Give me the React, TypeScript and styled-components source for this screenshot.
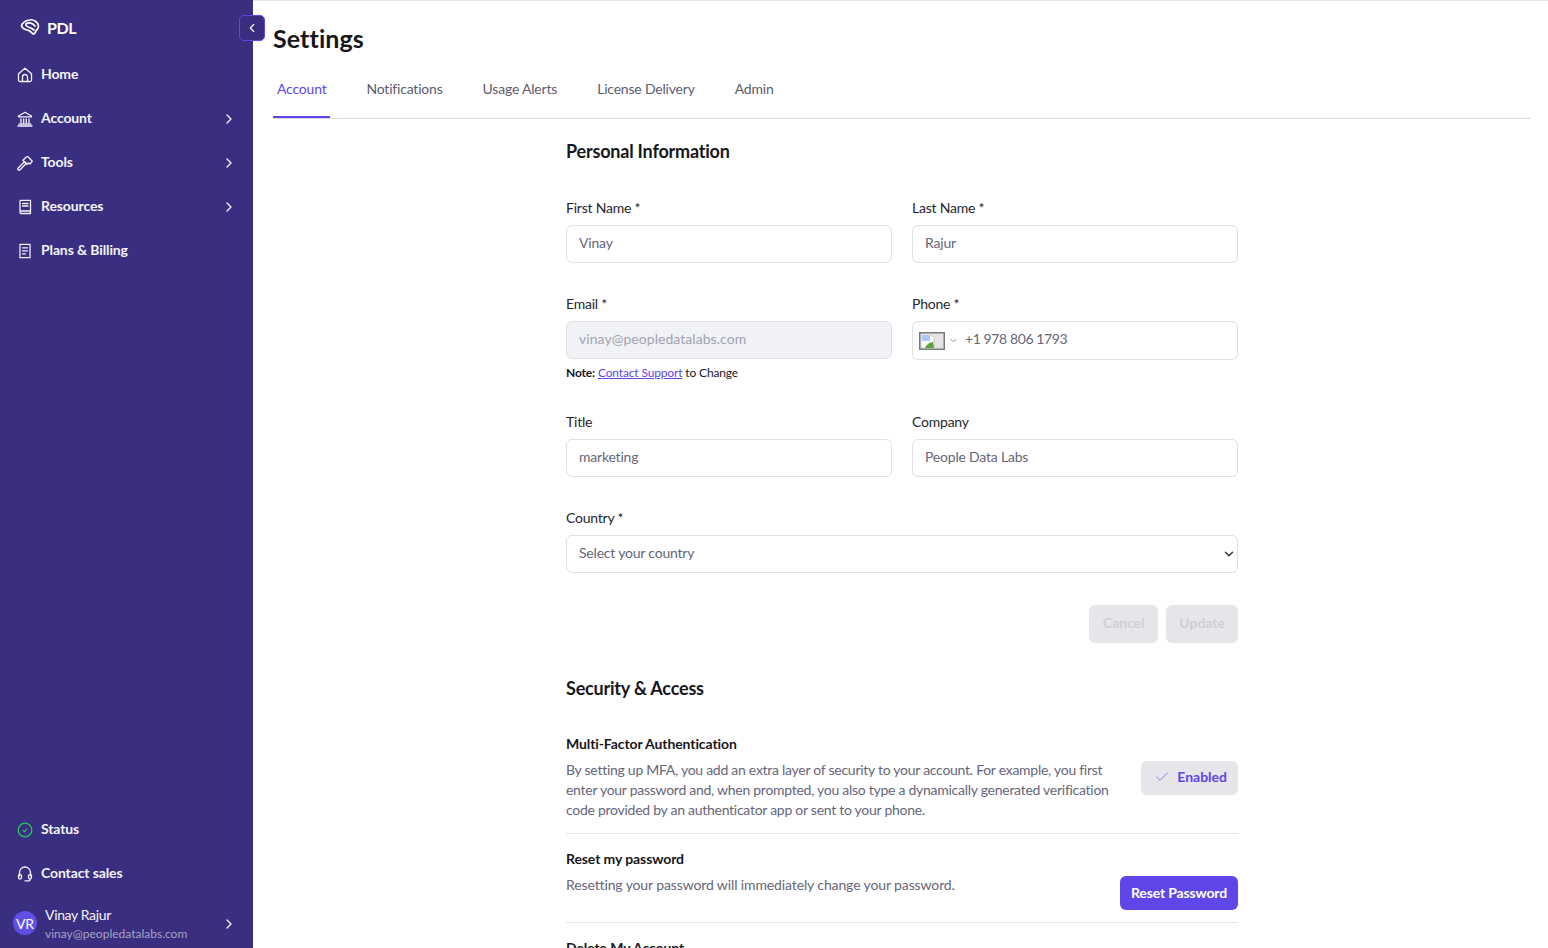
import React from 'react';
import styled, { createGlobalStyle } from 'styled-components';
import { ChevronDown, ChevronLeft, ChevronRight, Check } from 'lucide-react';

const GlobalStyle = createGlobalStyle`
  html, body {
    margin: 0;
    height: 100%;
    overflow: hidden;
    background: #fff;
  }
  * {
    box-sizing: border-box;
  }
  body {
    font-family: Lato, 'Noto Sans', sans-serif;
    color: #17171c;
  }
`;

const Page = styled.div`
  display: flex;
  height: 948px;
  overflow: hidden;
`;

const Sidebar = styled.aside`
  position: relative;
  flex: 0 0 253px;
  display: flex;
  flex-direction: column;
  background: #392e7f;
  color: #fff;
`;

const Brand = styled.div`
  display: flex;
  align-items: center;
  gap: 7px;
  height: 52px;
  padding: 2px 0 0 20px;
  font-size: 16px;
  font-weight: 700;
  letter-spacing: -0.4px;
`;

const CollapseButton = styled.button`
  position: absolute;
  top: 15px;
  right: -12px;
  width: 26px;
  height: 26px;
  display: flex;
  align-items: center;
  justify-content: center;
  padding: 0;
  color: #fff;
  background: #392e7f;
  border: 1px solid #5f46e8;
  border-radius: 5px;
`;

const NavList = styled.nav`
  display: flex;
  flex-direction: column;
`;

const NavItem = styled.div`
  display: flex;
  align-items: center;
  height: 44px;
  padding: 0 17px;
  gap: 8px;
  font-size: 14px;
  font-weight: 700;
  letter-spacing: -0.12px;
  color: #f4f3fa;
`;

const NavLabel = styled.span`
  flex: 1;
  padding-bottom: 2px;
`;

const IconSlot = styled.span`
  flex: 0 0 16px;
  display: flex;
  align-items: center;
  justify-content: center;
  margin-top: 2px;
`;

const ChevronSlot = styled.span`
  display: flex;
  margin: 2px -1px 0 0;
`;

const SidebarFooter = styled.div`
  margin-top: auto;
  display: flex;
  flex-direction: column;
`;

const UserRow = styled.div`
  display: flex;
  align-items: center;
  height: 50px;
  padding: 0 17px 0 13px;
  margin-top: 3px;
`;

const Avatar = styled.div`
  flex: 0 0 24px;
  height: 24px;
  border-radius: 50%;
  display: flex;
  align-items: center;
  justify-content: center;
  background: #5f4fe6;
  font-size: 14px;
  margin-right: 8px;
`;

const UserText = styled.div`
  flex: 1;
  display: flex;
  flex-direction: column;
  gap: 3px;
`;

const UserName = styled.span`
  font-size: 14px;
  letter-spacing: -0.35px;
  color: #f4f3fa;
`;

const UserEmail = styled.span`
  font-size: 12px;
  color: #a5a1c6;
`;

const Main = styled.main`
  flex: 1;
  min-width: 0;
  padding: 0 17px 0 20px;
  border-top: 1px solid #e5e5ea;
`;

const Title = styled.h1`
  margin: 0;
  padding-top: 21px;
  height: 65px;
  font-size: 25px;
  line-height: 32px;
  font-weight: 700;
  letter-spacing: 0.1px;
  color: #17171c;
`;

const Tabs = styled.div`
  display: flex;
  gap: 32px;
  height: 53px;
  border-bottom: 1px solid #d9d9de;
`;

const Tab = styled.div<{ $active?: boolean }>`
  height: 52px;
  padding: 13px 4px 0;
  font-size: 14px;
  line-height: 20px;
  letter-spacing: -0.2px;
  color: ${p => (p.$active ? '#5f46e8' : '#5c5c6e')};
  border-bottom: 2px solid ${p => (p.$active ? '#5f46e8' : 'transparent')};
`;

const Content = styled.div`
  width: 672px;
  margin: 0 auto;
`;

const SectionTitle = styled.h2<{ $top?: number }>`
  margin: ${p => p.$top ?? 0}px 0 0;
  font-size: 18px;
  line-height: 28px;
  font-weight: 700;
  letter-spacing: -0.2px;
`;

const FormGrid = styled.div`
  display: grid;
  grid-template-columns: 326px 326px;
  column-gap: 20px;
  margin-top: 33px;
`;

const Field = styled.div<{ $wide?: boolean; $height: number }>`
  grid-column: ${p => (p.$wide ? '1 / span 2' : 'auto')};
  height: ${p => p.$height}px;
`;

const Label = styled.label`
  display: block;
  height: 27px;
  font-size: 14px;
  line-height: 20px;
  letter-spacing: -0.22px;
  color: #26262e;
`;

const Input = styled.div<{ $disabled?: boolean; $tall?: boolean }>`
  display: flex;
  align-items: center;
  height: ${p => (p.$tall ? 39 : 38)}px;
  padding: 0 12px 4px;
  font-size: 14px;
  letter-spacing: ${p => (p.$disabled ? '0.05px' : '-0.2px')};
  color: ${p => (p.$disabled ? '#a2a2b2' : '#66667a')};
  background: ${p => (p.$disabled ? '#f1f2f5' : '#fff')};
  border: 1px solid #e0e0e6;
  border-radius: 6px;
`;

const FlagPicker = styled.span`
  display: flex;
  align-items: center;
  gap: 3px;
  margin: 4px 6px 0 -6px;
`;

const PhoneNumber = styled.span`
  letter-spacing: -0.4px;
`;

const SelectValue = styled.span`
  flex: 1;
`;

const SelectArrow = styled.span`
  display: flex;
  margin: 4px -11px 0 0;
`;

const Note = styled.div`
  margin-top: 6px;
  font-size: 12px;
  line-height: 16px;
  letter-spacing: -0.15px;
  color: #17171c;

  strong {
    font-weight: 700;
  }

  a {
    color: #5f46e8;
    text-decoration: underline;
  }
`;

const FormActions = styled.div`
  display: flex;
  justify-content: flex-end;
  gap: 8px;
  margin-top: 32px;
`;

const DisabledButton = styled.button`
  min-width: 69px;
  height: 38px;
  padding: 0 13px 4px;
  font: 700 14px Lato, sans-serif;
  color: #cfcfd6;
  background: #e5e5ea;
  border: 0;
  border-radius: 6px;
`;

const SecuritySection = styled.section`
  margin-top: 31px;
`;

const SettingList = styled.div`
  margin-top: 32px;
`;

const SettingRow = styled.div<{ $pad: number }>`
  display: flex;
  justify-content: space-between;
  align-items: center;
  gap: 32px;
  padding-bottom: ${p => p.$pad}px;
  margin-bottom: 15px;
  border-bottom: 1px solid #e5e5ea;
`;

const SettingText = styled.div`
  flex: 1;
  align-self: flex-start;
`;

const SettingName = styled.div`
  font-size: 14px;
  line-height: 20px;
  font-weight: 700;
  letter-spacing: -0.1px;
  margin-bottom: 6px;
`;

const SettingBody = styled.p<{ $tight?: boolean }>`
  margin: 0;
  font-size: 14px;
  line-height: 20px;
  letter-spacing: ${p => (p.$tight ? '-0.27px' : '-0.12px')};
  color: #66667a;
`;

const EnabledBadge = styled.div`
  display: flex;
  align-items: center;
  gap: 7px;
  height: 34px;
  margin-top: 2px;
  padding: 0 11px 3px 13px;
  font-size: 14px;
  font-weight: 700;
  color: #5f46e8;
  background: #e5e5ea;
  border-radius: 6px;
`;

const PrimaryButton = styled.button`
  height: 34px;
  padding: 0 11px 2px;
  margin-top: 27px;
  font: 700 14px Lato, sans-serif;
  letter-spacing: -0.15px;
  color: #fff;
  background: #5f46e8;
  border: 0;
  border-radius: 6px;
`;

const Glyph = styled.svg.attrs({ width: 16, height: 16, viewBox: '0 0 16 16', fill: 'none' })`
  stroke: #f4f3fa;
  stroke-width: 1.3;
  stroke-linecap: round;
  stroke-linejoin: round;
`;

const PdlLogo = () => (
  <svg width="20" height="18" viewBox="0 0 20 18" fill="none" stroke="#fff" strokeWidth="1.700" strokeLinejoin="round" strokeLinecap="round">
    <path d="M1.500 8C1.800 5 6 2 10 1.800 14 1.500 18 4 18.500 8c.3 3-2.500 4-3 6-.5 2-2.500 2.500-3.500 1l-3-2.500C6 12 2.500 11 1.500 8Z" />
    <path d="M6 5.800c3-1.800 7-.8 9 2.200M6 5.800c-1 2.200 2 3.200 5 4.200l3 2" />
  </svg>
);

const HomeIcon = () => (
  <Glyph>
    <path d="M1.500 6.800 8 1.200l6.500 5.600v6.200a1.500 1.500 0 0 1-1.500 1.500H3A1.500 1.500 0 0 1 1.500 13z" />
    <path d="M5.500 14.500v-4.500a2.500 2.500 0 0 1 5 0v4.500" />
  </Glyph>
);

const BankIcon = () => (
  <Glyph>
    <path d="M1.500 5 8 1.300 14.500 5v.8h-13z" />
    <path d="M4 8v4M6.700 8v4M9.300 8v4M12 8v4M2 13.200h12M1 15h14" />
  </Glyph>
);

const HammerIcon = () => (
  <Glyph>
    <path d="M1.200 13 7.500 6.800l1.700 1.700-6.200 6.300a1.200 1.200 0 0 1-1.800-1.800Z" />
    <path d="M6 5.300 9 2.200c.8-.7 1.800-.7 2.500 0l3.800 4-2.300 2.800-1.500-1.300-1.500 1.800L6 5.300Z" />
  </Glyph>
);

const BookIcon = () => (
  <Glyph>
    <path d="M3 12.500V2.200c0-.5.4-.9.900-.9H13.500v10.700H4.200C3.500 12 3 12.500 3 13.200s.5 1.300 1.200 1.300h9.300V12" />
    <path d="M5.500 4.500h5.500M5.500 7h5.500" />
  </Glyph>
);

const ReceiptIcon = () => (
  <Glyph>
    <path d="M3 1.300h10v13.400H3z" strokeDasharray="1.600 .9" />
    <path d="M5.500 4.800h5M5.500 7.800h5M5.500 10.800h3" />
  </Glyph>
);

const StatusIcon = () => (
  <svg width="16" height="16" viewBox="0 0 16 16" fill="none" stroke="#22c55e" strokeWidth="1.300">
    <circle cx="8" cy="8" r="6.800" />
    <path d="m5.800 8.200 1.600 1.400 2.800-3" />
  </svg>
);

const HeadsetIcon = () => (
  <Glyph>
    <path d="M2.500 10V6.500a5.500 5.500 0 0 1 11 0V10" />
    <path d="M1.500 10a1.500 1.500 0 0 1 3 0v1.500a1.500 1.500 0 0 1-3 0zM11.500 10a1.500 1.500 0 0 1 3 0v1.500a1.500 1.500 0 0 1-3 0z" />
    <path d="M13 13.500v.2c0 .6-.5 1.100-1.200 1.100H8" />
  </Glyph>
);

// the browser's broken-image marker, stretched to the flag's box
const BrokenImage = () => (
  <svg width="26" height="18" viewBox="0 0 26 18">
    <rect x="0.750" y="0.750" width="24.500" height="16.500" fill="#e4e4e4" stroke="#7a7a7a" strokeWidth="1.500" />
    <path d="M2 2h9l4 4v10H2z" fill="#fff" stroke="#aaa" strokeWidth="0.600" />
    <path d="M3 3h8v6H3z" fill="#a9c9f0" />
    <path d="M6 16c1-3 5-6 8-6l1 6z" fill="#5aa63c" />
  </svg>
);

const Chevron = () => (
  <ChevronSlot>
    <ChevronRight size={16} strokeWidth={2} color="#f4f3fa" />
  </ChevronSlot>
);

const navItems = [
  { label: 'Home', icon: <HomeIcon /> },
  { label: 'Account', icon: <BankIcon />, more: true },
  { label: 'Tools', icon: <HammerIcon />, more: true },
  { label: 'Resources', icon: <BookIcon />, more: true },
  { label: 'Plans & Billing', icon: <ReceiptIcon /> },
];

const tabs = ['Account', 'Notifications', 'Usage Alerts', 'License Delivery', 'Admin'];

export default function App() {
  return (
    <Page>
      <GlobalStyle />
      <Sidebar>
        <Brand>
          <PdlLogo />
          PDL
        </Brand>
        <CollapseButton>
          <ChevronLeft size={14} strokeWidth={2} />
        </CollapseButton>
        <NavList>
          {navItems.map(item => (
            <NavItem key={item.label}>
              <IconSlot>{item.icon}</IconSlot>
              <NavLabel>{item.label}</NavLabel>
              {item.more && <Chevron />}
            </NavItem>
          ))}
        </NavList>
        <SidebarFooter>
          <NavItem>
            <IconSlot>
              <StatusIcon />
            </IconSlot>
            <NavLabel>Status</NavLabel>
          </NavItem>
          <NavItem>
            <IconSlot>
              <HeadsetIcon />
            </IconSlot>
            <NavLabel>Contact sales</NavLabel>
          </NavItem>
          <UserRow>
            <Avatar>VR</Avatar>
            <UserText>
              <UserName>Vinay Rajur</UserName>
              <UserEmail>vinay@peopledatalabs.com</UserEmail>
            </UserText>
            <Chevron />
          </UserRow>
        </SidebarFooter>
      </Sidebar>
      <Main>
        <Title>Settings</Title>
        <Tabs>
          {tabs.map((tab, i) => (
            <Tab key={tab} $active={i === 0}>
              {tab}
            </Tab>
          ))}
        </Tabs>
        <Content>
          <SectionTitle $top={18}>Personal Information</SectionTitle>
          <FormGrid>
            <Field $height={96}>
              <Label>First Name *</Label>
              <Input>Vinay</Input>
            </Field>
            <Field $height={96}>
              <Label>Last Name *</Label>
              <Input>Rajur</Input>
            </Field>
            <Field $height={118}>
              <Label>Email *</Label>
              <Input $disabled>vinay@peopledatalabs.com</Input>
              <Note>
                <strong>Note:</strong> <a>Contact Support</a> to Change
              </Note>
            </Field>
            <Field $height={118}>
              <Label>Phone *</Label>
              <Input $tall>
                <FlagPicker>
                  <BrokenImage />
                  <ChevronDown size={11} strokeWidth={1.500} color="#66667a" />
                </FlagPicker>
                <PhoneNumber>+1 978 806 1793</PhoneNumber>
              </Input>
            </Field>
            <Field $height={96}>
              <Label>Title</Label>
              <Input>marketing</Input>
            </Field>
            <Field $height={96}>
              <Label>Company</Label>
              <Input>People Data Labs</Input>
            </Field>
            <Field $wide $height={65}>
              <Label>Country *</Label>
              <Input>
                <SelectValue>Select your country</SelectValue>
                <SelectArrow>
                  <ChevronDown size={14} strokeWidth={2.500} color="#333" />
                </SelectArrow>
              </Input>
            </Field>
          </FormGrid>
          <FormActions>
            <DisabledButton>Cancel</DisabledButton>
            <DisabledButton>Update</DisabledButton>
          </FormActions>
          <SecuritySection>
            <SectionTitle>Security &amp; Access</SectionTitle>
            <SettingList>
              <SettingRow $pad={13}>
                <SettingText>
                  <SettingName>Multi-Factor Authentication</SettingName>
                  <SettingBody $tight>
                    By setting up MFA, you add an extra layer of security to your account. For example, you first enter
                    your password and, when prompted, you also type a dynamically generated verification code provided
                    by an authenticator app or sent to your phone.
                  </SettingBody>
                </SettingText>
                <EnabledBadge>
                  <Check size={16} strokeWidth={1} />
                  Enabled
                </EnabledBadge>
              </SettingRow>
              <SettingRow $pad={12}>
                <SettingText>
                  <SettingName>Reset my password</SettingName>
                  <SettingBody>Resetting your password will immediately change your password.</SettingBody>
                </SettingText>
                <PrimaryButton>Reset Password</PrimaryButton>
              </SettingRow>
              <SettingName>Delete My Account</SettingName>
            </SettingList>
          </SecuritySection>
        </Content>
      </Main>
    </Page>
  );
}
